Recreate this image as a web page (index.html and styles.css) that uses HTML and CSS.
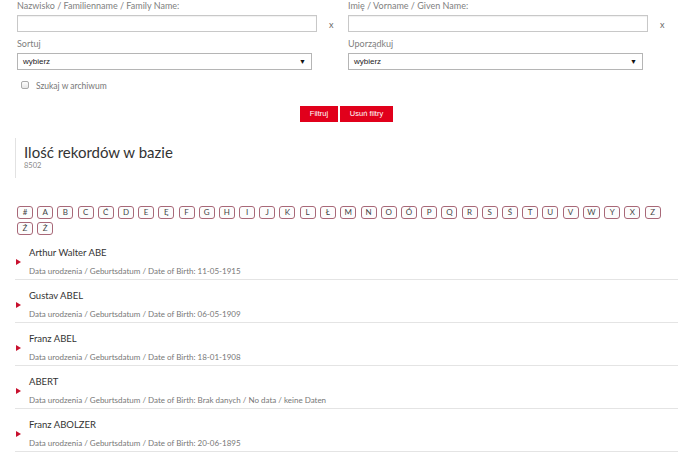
FILE: index.html
```html
<!DOCTYPE html>
<html lang="pl">
<head>
<meta charset="utf-8">
<title>Baza</title>
<link rel="stylesheet" href="styles.css">
</head>
<body>
<div class="filters">
  <div class="col">
    <div class="lbl">Nazwisko / Familienname / Family Name:</div>
    <div class="inrow"><div class="txt"></div><span class="clr">x</span></div>
    <div class="lbl lbl2">Sortuj</div>
    <div class="sel"><span>wybierz</span><span class="arr">▼</span></div>
  </div>
  <div class="col">
    <div class="lbl">Imię / Vorname / Given Name:</div>
    <div class="inrow"><div class="txt"></div><span class="clr">x</span></div>
    <div class="lbl lbl2">Uporządkuj</div>
    <div class="sel"><span>wybierz</span><span class="arr">▼</span></div>
  </div>
</div>
<div class="archive"><span class="cb"></span><span>Szukaj w archiwum</span></div>
<div class="buttons"><span class="btn">Filtruj</span><span class="btn">Usuń filtry</span></div>
<div class="count">
  <div class="count-title">Ilość rekordów w bazie</div>
  <div class="count-num">8502</div>
</div>
<div class="letters">
  <span class="let">#</span><span class="let">A</span><span class="let">B</span><span class="let">C</span><span class="let">Ć</span><span class="let">D</span><span class="let">E</span><span class="let">Ę</span><span class="let">F</span><span class="let">G</span><span class="let">H</span><span class="let">I</span><span class="let">J</span><span class="let">K</span><span class="let">L</span><span class="let">Ł</span><span class="let">M</span><span class="let">N</span><span class="let">O</span><span class="let">Ó</span><span class="let">P</span><span class="let">Q</span><span class="let">R</span><span class="let">S</span><span class="let">Ś</span><span class="let">T</span><span class="let">U</span><span class="let">V</span><span class="let">W</span><span class="let">Y</span><span class="let">X</span><span class="let">Z</span><span class="let">Ź</span><span class="let">Ż</span>
</div>
<div class="records">
  <div class="rec"><span class="tri"></span><div><div class="name">Arthur Walter ABE</div><div class="date">Data urodzenia / Geburtsdatum / Date of Birth: 11-05-1915</div></div></div>
  <div class="rec"><span class="tri"></span><div><div class="name">Gustav ABEL</div><div class="date">Data urodzenia / Geburtsdatum / Date of Birth: 06-05-1909</div></div></div>
  <div class="rec"><span class="tri"></span><div><div class="name">Franz ABEL</div><div class="date">Data urodzenia / Geburtsdatum / Date of Birth: 18-01-1908</div></div></div>
  <div class="rec"><span class="tri"></span><div><div class="name">ABERT</div><div class="date">Data urodzenia / Geburtsdatum / Date of Birth: Brak danych / No data / keine Daten</div></div></div>
  <div class="rec"><span class="tri"></span><div><div class="name">Franz ABOLZER</div><div class="date">Data urodzenia / Geburtsdatum / Date of Birth: 20-06-1895</div></div></div>
</div>
</body>
</html>
```
FILE: styles.css
```css
* { box-sizing: border-box; }
body {
  margin: 0;
  background: #fff;
  font-family: "Lato", "Open Sans", sans-serif;
  color: #333;
}
.filters {
  display: grid;
  grid-template-columns: 331px 331px;
  padding-left: 17px;
}
.lbl {
  height: 12px;
  line-height: 12px;
  font-size: 9px;
  color: #808080;
}
.lbl2 { margin-top: 6px; }
.inrow {
  display: flex;
  align-items: center;
  margin-top: 3px;
}
.txt {
  width: 300px;
  height: 17px;
  border: 1px solid #c8c8c8;
  box-shadow: inset 0 1px 1px rgba(0,0,0,0.06);
  background: #fff;
}
.clr {
  margin-left: 12px;
  font-size: 9px;
  color: #666;
  margin-top: 2px;
}
.sel {
  margin-top: 3px;
  width: 295px;
  height: 17px;
  border: 1px solid #b5b5b5;
  display: flex;
  align-items: center;
  justify-content: space-between;
  padding: 0 5px 0 5px;
  font-family: "Liberation Sans", Arial, sans-serif;
  font-size: 8px;
  color: #222;
}
.arr { font-size: 7px; color: #111; }
.archive {
  margin-top: 10px;
  padding-left: 21px;
  display: flex;
  align-items: center;
  height: 12px;
  font-size: 8.5px;
  color: #777;
}
.cb {
  width: 8px;
  height: 8px;
  border: 1px solid #aaa;
  border-radius: 2px;
  background: linear-gradient(#fdfdfd, #e6e6e6);
  margin-right: 7px;
  margin-top: -3px;
}
.buttons {
  margin-top: 14px;
  padding-left: 17px;
  padding-right: 4px;
  display: flex;
  justify-content: center;
  gap: 2px;
}
.btn {
  height: 16px;
  line-height: 16px;
  background: #e1001b;
  color: #fff;
  font-family: "Liberation Sans", Arial, sans-serif;
  font-size: 7.5px;
  text-align: center;
}
.btn:first-child { width: 38px; }
.btn:last-child { width: 53px; }
.count {
  margin-top: 16px;
  margin-left: 15px;
  border-left: 1px solid #e2e2e2;
  height: 40px;
  padding-left: 8px;
  padding-top: 6px;
}
.count-title {
  font-size: 15px;
  line-height: 17px;
  color: #333;
}
.count-num {
  font-size: 7.5px;
  line-height: 9px;
  color: #888;
}
.letters {
  margin-top: 28px;
  margin-left: 17px;
  width: 652px;
  display: flex;
  flex-wrap: wrap;
  column-gap: 4.2px;
  row-gap: 3px;
}
.let {
  min-width: 16px;
  height: 13px;
  padding: 0 3.5px;
  border: 1px solid #a86878;
  border-radius: 3px;
  background: #fcfcfc;
  font-size: 8px;
  line-height: 11px;
  text-align: center;
  color: #444;
}
.records {
  margin-top: 2px;
  margin-left: 15px;
  margin-right: 2px;
}
.rec {
  display: flex;
  align-items: center;
  padding: 10px 0 2px 1px;
  border-bottom: 1px solid #e4e4e4;
}
.tri {
  width: 0;
  height: 0;
  border-top: 3px solid transparent;
  border-bottom: 3px solid transparent;
  border-left: 5px solid #c8102e;
  margin-right: 8px;
}
.name {
  font-size: 9.5px;
  line-height: 12px;
  color: #333;
}
.date {
  margin-top: 6px;
  font-size: 8px;
  line-height: 12px;
  color: #777;
}
```
